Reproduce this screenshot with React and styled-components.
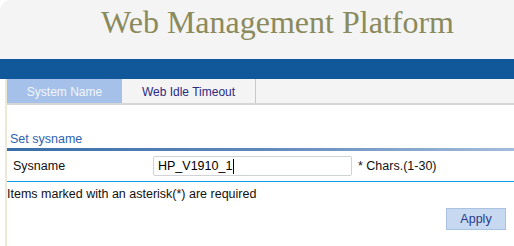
import styled, { createGlobalStyle } from "styled-components";

const GlobalStyle = createGlobalStyle`
	html, body {
		margin: 0;
		padding: 0;
		background: #fff;
		font-family: "Liberation Sans", Arial, sans-serif;
		font-size: 12.5px;
	}
`;

const Page = styled.div`
	width: 514px;
	height: 246px;
	overflow: hidden;
	background: #fff;
`;

const Header = styled.header`
	height: 59px;
	background: #f4f4f4;
	border-top-left-radius: 10px;
	display: flex;
	justify-content: center;
	padding-left: 41px;
	box-sizing: border-box;
`;

const Title = styled.h1`
	margin: 0;
	font-family: "Liberation Serif", "Times New Roman", serif;
	font-weight: normal;
	font-size: 32px;
	line-height: 32px;
	padding-top: 6px;
	color: #8a8a5c;
	white-space: nowrap;
`;

const BlueBar = styled.div`
	height: 20px;
	background: #11589a;
`;

const Main = styled.div`
	padding-left: 5px;
`;

const Frame = styled.div`
	border-left: 2px solid #ece9d8;
	min-height: 167px;
`;

const TabBar = styled.div`
	display: flex;
	height: 24px;
	background: #f4f4f4;
	border-bottom: 2px solid #d6d6d6;
`;

const Tab = styled.div`
	width: ${(p) => p.width}px;
	display: flex;
	align-items: center;
	justify-content: center;
	padding-top: 1px;
	box-sizing: border-box;
	font-size: 12px;
	background: ${(p) => (p.active ? "#a5c1e9" : "transparent")};
	color: ${(p) => (p.active ? "#f2f6fc" : "#2b2b84")};
	border-right: ${(p) => (p.active ? "none" : "1px solid #c9c9c9")};
`;

const Section = styled.div`
	padding-top: 26px;
`;

const SectionTitle = styled.div`
	color: #2f62b3;
	padding-left: 3px;
	height: 17px;
	line-height: 17px;
`;

const GradientLine = styled.div`
	height: 3px;
	background: linear-gradient(to right, #3a6da7, #5f88bb 50%, #a3bcdb);
`;

const FormRow = styled.div`
	display: flex;
	align-items: center;
	height: 30px;
	border-bottom: 1px solid #0aa1ea;
`;

const Label = styled.div`
	width: 146px;
	box-sizing: border-box;
	padding-left: 6px;
	color: #111;
`;

const TextBox = styled.div`
	width: 199px;
	height: 20px;
	box-sizing: border-box;
	border: 1px solid #cfd2d6;
	border-radius: 2px;
	display: flex;
	align-items: center;
	padding-left: 4px;
	color: #000;
`;

const Caret = styled.span`
	display: inline-block;
	width: 1px;
	height: 15px;
	background: #000;
	margin-left: 1px;
`;

const Hint = styled.div`
	margin-left: 6px;
	color: #111;
`;

const Note = styled.div`
	color: #111;
	padding-top: 4px;
	height: 16px;
	line-height: 16px;
`;

const Actions = styled.div`
	display: flex;
	justify-content: flex-end;
	padding: 6px 8px 0 0;
`;

const Button = styled.button`
	width: 60px;
	height: 22px;
	background: #c7d9f1;
	border: 1px solid #a9c2e2;
	color: #2a3a8a;
	font-family: inherit;
	font-size: 12.5px;
	padding: 0;
	cursor: pointer;
`;

export default function App() {
	return (
		<Page>
			<GlobalStyle />
			<Header>
				<Title>Web Management Platform</Title>
			</Header>
			<BlueBar />
			<Main>
				<Frame>
					<TabBar>
						<Tab width={115} active>
							System Name
						</Tab>
						<Tab width={134}>Web Idle Timeout</Tab>
					</TabBar>
					<Section>
						<SectionTitle>Set sysname</SectionTitle>
						<GradientLine />
						<FormRow>
							<Label>Sysname</Label>
							<TextBox>
								HP_V1910_1
								<Caret />
							</TextBox>
							<Hint>* Chars.(1-30)</Hint>
						</FormRow>
						<Note>Items marked with an asterisk(*) are required</Note>
						<Actions>
							<Button type="button">Apply</Button>
						</Actions>
					</Section>
				</Frame>
			</Main>
		</Page>
	);
}
